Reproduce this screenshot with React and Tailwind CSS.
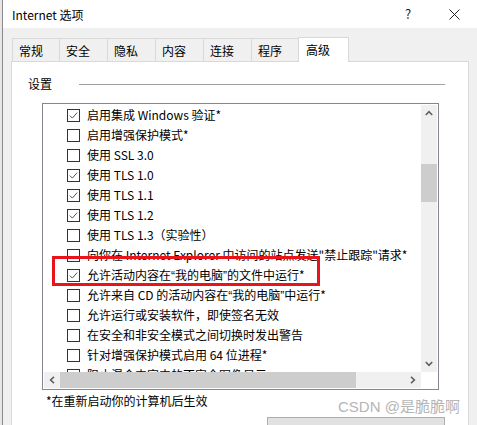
import React from 'react';

const settings = [
  { checked: true, label: '启用集成 Windows 验证*' },
  { checked: false, label: '启用增强保护模式*' },
  { checked: false, label: '使用 SSL 3.0' },
  { checked: true, label: '使用 TLS 1.0' },
  { checked: true, label: '使用 TLS 1.1' },
  { checked: true, label: '使用 TLS 1.2' },
  { checked: false, label: '使用 TLS 1.3（实验性）' },
  { checked: false, label: '向你在 Internet Explorer 中访问的站点发送"禁止跟踪"请求*' },
  { checked: true, label: '允许活动内容在“我的电脑”的文件中运行*' },
  { checked: false, label: '允许来自 CD 的活动内容在“我的电脑”中运行*' },
  { checked: false, label: '允许运行或安装软件，即使签名无效' },
  { checked: false, label: '在安全和非安全模式之间切换时发出警告' },
  { checked: false, label: '针对增强保护模式启用 64 位进程*' },
  { checked: false, label: '阻止混合内容中的不安全图像显示' },
];

const tabs = [
  { name: '常规', w: 'w-[47px]' },
  { name: '安全', w: 'w-[48px]' },
  { name: '隐私', w: 'w-[48px]' },
  { name: '内容', w: 'w-[48px]' },
  { name: '连接', w: 'w-[48px]' },
  { name: '程序', w: 'w-[47px]' },
];

// curly quotes come out full width in the CJK font, the dialog shows them narrow
const Label = ({ text }) => (
  <span className="text-[12px] leading-[16px] text-black">
    {text.split(/([“”])/).map((part, i) =>
      part === '“' || part === '”' ? (
        <span key={i} className="font-['Liberation_Sans',sans-serif]">{part}</span>
      ) : (
        part
      )
    )}
  </span>
);

const Checkbox = ({ checked }) => (
  <div className="w-[13px] h-[13px] border border-[#333] bg-white flex items-center justify-center shrink-0">
    {checked && (
      <svg width="11" height="11" viewBox="0 0 11 11">
        <path d="M1.8 5.6 L4.3 8.1 L9.2 2.6" fill="none" stroke="#555" strokeWidth="1" />
      </svg>
    )}
  </div>
);

const Arrow = ({ dir }) => {
  const rot = { up: 0, down: 180, left: 270, right: 90 }[dir];
  return (
    <svg width="8" height="8" viewBox="0 0 8 8" style={{ transform: `rotate(${rot}deg)` }}>
      <path d="M0.8 6 L4 2.6 L7.2 6" fill="none" stroke="#606060" strokeWidth="1.6" />
    </svg>
  );
};

const SettingsList = () => (
  <div className="w-[397px] h-[287px] border border-[#828790] bg-white p-[1px] flex flex-col">
    <div className="flex h-[267px]">
      <div className="flex-1 overflow-hidden">
        {settings.map((item) => (
          <div key={item.label} className="h-[20px] flex items-center pl-[23px] gap-[7px] whitespace-nowrap">
            <Checkbox checked={item.checked} />
            <Label text={item.label} />
          </div>
        ))}
      </div>
      {/* vertical scrollbar */}
      <div className="w-[16px] bg-[#f0f0f0] flex flex-col">
        <div className="h-[16px] flex items-center justify-center">
          <Arrow dir="up" />
        </div>
        <div className="flex-1 pt-[43px]">
          <div className="h-[38px] bg-[#cdcdcd]" />
        </div>
        <div className="h-[16px] flex items-center justify-center">
          <Arrow dir="down" />
        </div>
      </div>
    </div>
    {/* horizontal scrollbar */}
    <div className="flex h-[16px]">
      <div className="flex-1 bg-[#f0f0f0] flex">
        <div className="w-[16px] flex items-center justify-center">
          <Arrow dir="left" />
        </div>
        <div className="w-[296px] bg-[#cdcdcd]" />
        <div className="flex-1" />
        <div className="w-[16px] flex items-center justify-center">
          <Arrow dir="right" />
        </div>
      </div>
      <div className="w-[16px] bg-white" />
    </div>
  </div>
);

const App = () => {
  return (
    <div className="relative w-[477px] h-[425px] overflow-hidden bg-[#f0f0f0] flex font-['Noto_Sans_CJK_SC',sans-serif] text-black">
      <div className="w-[2px] shrink-0 bg-[#e6e6e6]" />
      <div className="w-[1px] shrink-0 bg-[#8a8a8a]" />
      <div className="flex-1 flex flex-col overflow-hidden">
        {/* title bar */}
        <div className="h-[28px] shrink-0 bg-white flex items-center">
          <span className="pl-[9px] text-[12px] leading-[16px] pt-[1px]">Internet 选项</span>
          <div className="ml-auto flex h-full">
            <div className="w-[46px] flex items-center justify-center text-[13px] text-[#222]">?</div>
            <div className="w-[46px] flex items-center justify-center">
              <svg width="11" height="11" viewBox="0 0 11 11">
                <path d="M0.5 0.5 L10.5 10.5 M10.5 0.5 L0.5 10.5" stroke="#222" strokeWidth="1" />
              </svg>
            </div>
          </div>
        </div>

        {/* body */}
        <div className="flex-1 min-h-0 pt-[9px] pl-[8px]">
          <div className="flex items-end ml-[1px]">
            {tabs.map((tab) => (
              <div
                key={tab.name}
                className={`${tab.w} h-[23px] border-t border-l border-[#d9d9d9] flex items-center pl-[6px] pt-[1px] text-[12px]`}
              >
                {tab.name}
              </div>
            ))}
            <div className="relative z-10 -mb-px w-[51px] h-[25px] bg-white border-t border-l border-r border-[#d9d9d9] flex items-center pl-[7px] pb-[1px] text-[12px]">
              高级
            </div>
          </div>

          <div className="w-[458px] h-[380px] bg-white border border-[#d9d9d9]">
            <div className="mt-[12px] h-[20px] flex items-center pl-[16px] pr-[23px]">
              <span className="text-[12px]">设置</span>
              <div className="flex-1 ml-[27px] h-px bg-[#a0a0a0]" />
            </div>

            <div className="mt-[9px] ml-[30px]">
              <SettingsList />
            </div>

            <div className="mt-[3px] ml-[34px] text-[12px] leading-[16px]">*在重新启动你的计算机后生效</div>

            <div className="mt-[8px] ml-[255px] w-[178px] h-[23px] bg-[#e1e1e1] border border-[#adadad]" />
          </div>
        </div>
      </div>

      {/* red annotation */}
      <div className="absolute left-[52px] top-[256px] w-[268px] h-[30px] border-[3px] border-[#e8141a]" />

      {/* watermark */}
      <div className="absolute left-[338px] top-[397px] text-[15px] leading-[20px] text-[#b5b5b5] font-['Liberation_Sans','Noto_Sans_CJK_SC',sans-serif] whitespace-nowrap">
        CSDN @是脆脆啊
      </div>
    </div>
  );
};

export default App;
